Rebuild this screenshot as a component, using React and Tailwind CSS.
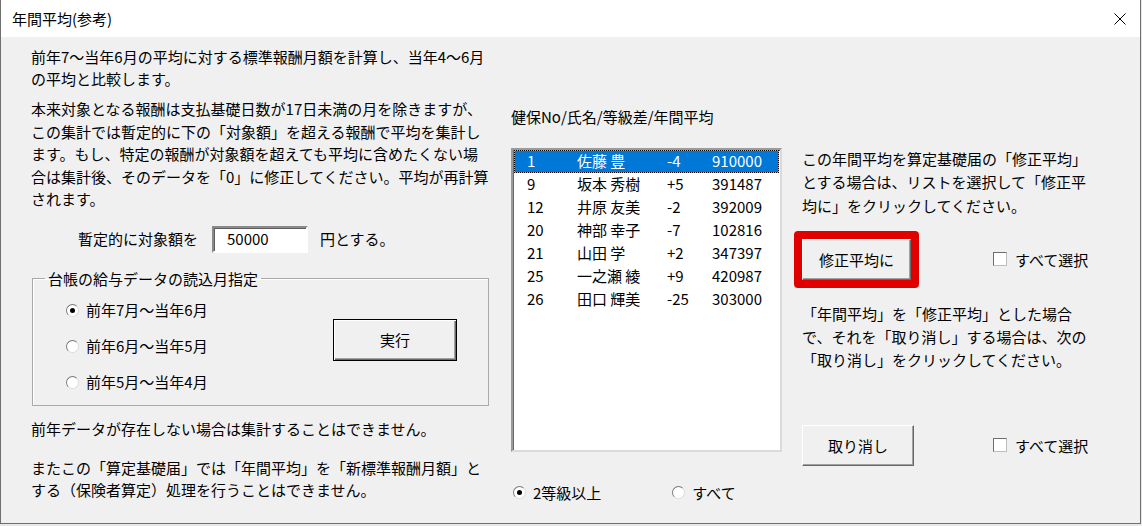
import React from 'react'

const rows = [
  { no: '1', name: '佐藤 豊', diff: '-4', avg: '910000' },
  { no: '9', name: '坂本 秀樹', diff: '+5', avg: '391487' },
  { no: '12', name: '井原 友美', diff: '-2', avg: '392009' },
  { no: '20', name: '神部 幸子', diff: '-7', avg: '102816' },
  { no: '21', name: '山田 学', diff: '+2', avg: '347397' },
  { no: '25', name: '一之瀬 綾', diff: '+9', avg: '420987' },
  { no: '26', name: '田口 輝美', diff: '-25', avg: '303000' },
]

function Radio({ checked, label, className = '' }) {
  return (
    <div className={`flex items-center h-[22.5px] ${className}`}>
      <span className="w-[13px] h-[13px] rounded-full bg-white border border-[#7a7a7a] border-r-[#dcdcdc] border-b-[#dcdcdc] flex items-center justify-center shrink-0">
        {checked && <span className="w-[5px] h-[5px] rounded-full bg-black" />}
      </span>
      <span className="ml-[7px] whitespace-nowrap">{label}</span>
    </div>
  )
}

function Check({ label }) {
  return (
    <div className="flex items-center h-[22.5px]">
      <span className="w-[14px] h-[14px] bg-white border border-[#6e6e6e] border-r-[#bdbdbd] border-b-[#bdbdbd] shrink-0" />
      <span className="ml-[8px] whitespace-nowrap">{label}</span>
    </div>
  )
}

const raised = 'bg-[#f0f0f0] border border-t-white border-l-white border-r-[#696969] border-b-[#696969] shadow-[inset_-1px_-1px_0_#a0a0a0]'

export default function App() {
  return (
    <div className="w-[1142px] h-[526px] bg-[#e8e8e8] overflow-hidden text-black font-['Noto_Sans_CJK_JP',sans-serif] text-[15px]">
      <div className="w-[1141px] h-[524px] border border-t-0 border-[#6f6f6f] flex flex-col bg-[#f0f0f0]">
        {/* title bar */}
        <div className="h-[37px] bg-white flex items-center justify-between pl-[11px] pr-[14px] shrink-0">
          <span className="leading-none">年間平均(参考)</span>
          <svg width="12" height="12" viewBox="0 0 12 12" className="mt-[1px]">
            <path d="M0.5 0.5L11.5 11.5M11.5 0.5L0.5 11.5" stroke="#000" strokeWidth="1" />
          </svg>
        </div>

        <div className="flex flex-1 leading-[22.5px]">
          {/* left column */}
          <div className="w-[490px] pl-[30px] pt-[9px] shrink-0">
            <p className="leading-[22px] whitespace-nowrap">
              前年7～当年6月の平均に対する標準報酬月額を計算し、当年4～6月<br />
              の平均と比較します。
            </p>
            <p className="mt-[8px] whitespace-nowrap">
              本来対象となる報酬は支払基礎日数が17日未満の月を除きますが、<br />
              この集計では暫定的に下の「対象額」を超える報酬で平均を集計し<br />
              ます。もし、特定の報酬が対象額を超えても平均に含めたくない場<br />
              合は集計後、そのデータを「0」に修正してください。平均が再計算<br />
              されます。
            </p>
            <div className="mt-[15px] ml-[47px] flex items-center h-[27px]">
              <span>暫定的に対象額を</span>
              <div className="ml-[14px] w-[96px] h-[27px] bg-white border-2 border-t-[#8a8a8a] border-l-[#8a8a8a] border-r-white border-b-white shadow-[inset_1px_1px_0_#5f5f5f] flex items-center pl-[13px]">
                50000
              </div>
              <span className="ml-[12px]">円とする。</span>
            </div>

            <fieldset className="mt-[15px] ml-[1px] w-[457px] h-[138px] border border-[#a9a9a9] shadow-[inset_1px_1px_0_#fff] flex">
              <legend className="ml-[12px] px-[3px]">台帳の給与データの読込月指定</legend>
              <div className="flex w-full">
                <div className="w-[300px] pl-[33px] pt-[9px] flex flex-col gap-[13.5px]">
                  <Radio checked label="前年7月～当年6月" />
                  <Radio label="前年6月～当年5月" />
                  <Radio label="前年5月～当年4月" />
                </div>
                <button className="mt-[29px] w-[124px] h-[42px] bg-[#f0f0f0] border border-black shadow-[inset_1px_1px_0_#fff,inset_-1px_-1px_0_#696969,inset_-2px_-2px_0_#a0a0a0] flex items-center justify-center">
                  実行
                </button>
              </div>
            </fieldset>

            <p className="mt-[12px] whitespace-nowrap">前年データが存在しない場合は集計することはできません。</p>
            <p className="mt-[16.5px] whitespace-nowrap">
              またこの「算定基礎届」では「年間平均」を「新標準報酬月額」と<br />
              する（保険者算定）処理を行うことはできません。
            </p>
          </div>

          {/* middle column */}
          <div className="ml-[20px] w-[271px] pt-[69px] shrink-0">
            <div className="whitespace-nowrap">健保No/氏名/等級差/年間平均</div>
            <div className="mt-[19px] h-[304px] bg-white border-2 border-t-[#9a9a9a] border-l-[#9a9a9a] border-r-[#dadada] border-b-[#dadada] shadow-[inset_1px_1px_0_#6a6a6a] pt-[0px] pl-[1px] pr-[1px]">
              {rows.map((r, i) => {
                const cells = (
                  <>
                    <span className="w-[62px] pl-[12px]">{r.no}</span>
                    <span className="w-[90px] whitespace-nowrap">{r.name}</span>
                    <span className="w-[45px]">{r.diff}</span>
                    <span>{r.avg}</span>
                  </>
                )
                return i === 0 ? (
                  <div key={r.no} className="bg-[#f0a030] h-[23px]">
                    <div className="h-[23px] flex items-center border border-dotted border-black bg-[#0078d7] bg-clip-padding text-white">
                      {cells}
                    </div>
                  </div>
                ) : (
                  <div key={r.no} className="h-[23px] flex items-center pl-[1px]">
                    {cells}
                  </div>
                )
              })}
            </div>
            <div className="mt-[30px] flex">
              <Radio checked label="2等級以上" className="ml-[2px]" />
              <Radio label="すべて" className="ml-[71px]" />
            </div>
          </div>

          {/* right column */}
          <div className="ml-[12px] pt-[110px] flex-1 leading-[23.3px]">
            <p className="pl-[8px] whitespace-nowrap">
              この年間平均を算定基礎届の「修正平均」<br />
              とする場合は、リストを選択して「修正平<br />
              均に」をクリックしてください。
            </p>
            <div className="mt-[14px] flex items-center">
              <div className="w-[125px] h-[57px] border-[8px] border-[#e10000] rounded-[4px]">
                <button className={`w-full h-full flex items-center justify-center ${raised}`}>修正平均に</button>
              </div>
              <div className="ml-[74px]">
                <Check label="すべて選択" />
              </div>
            </div>
            <p className="mt-[14px] pl-[8px] whitespace-nowrap">
              「年間平均」を「修正平均」とした場合<br />
              で、それを「取り消し」する場合は、次の<br />
              「取り消し」をクリックしてください。
            </p>
            <div className="mt-[53px] flex items-center">
              <button className={`ml-[8px] w-[112px] h-[41px] flex items-center justify-center ${raised}`}>取り消し</button>
              <div className="ml-[79px]">
                <Check label="すべて選択" />
              </div>
            </div>
          </div>
        </div>
      </div>
    </div>
  )
}
